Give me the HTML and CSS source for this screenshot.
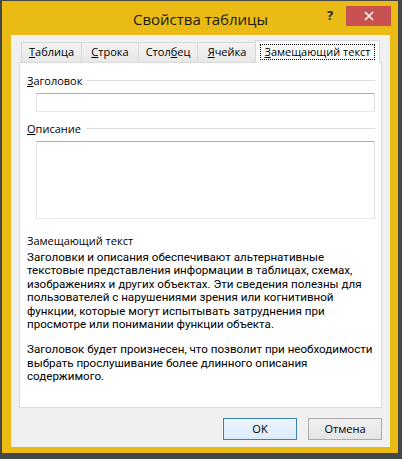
FILE: index.html
```html
<!DOCTYPE html>
<html lang="ru">
<head>
<meta charset="utf-8">
<title>Свойства таблицы</title>
<link rel="stylesheet" href="styles.css">
</head>
<body>
<div class="window">
  <div class="titlebar">
    <div class="title">Свойства таблицы</div>
    <div class="caption-btns">
      <div class="help">?</div>
      <div class="close">
        <svg width="10" height="10" viewBox="0 0 10 10"><path d="M1 1 L9 9 M9 1 L1 9" stroke="#fff" stroke-width="1.6" fill="none"/></svg>
      </div>
    </div>
  </div>
  <div class="client">
    <div class="tabs">
      <div class="tab t1"><u>Т</u>аблица</div>
      <div class="tab t2"><u>С</u>трока</div>
      <div class="tab t3">Стол<u>б</u>ец</div>
      <div class="tab t4"><u>Я</u>чейка</div>
      <div class="tab active"><span class="focus"><u>З</u>амещающий текст</span></div>
    </div>
    <div class="panel">
      <div class="group"><span class="label"><u>З</u>аголовок</span><span class="rule"></span></div>
      <div class="field input"></div>
      <div class="group second"><span class="label"><u>О</u>писание</span><span class="rule"></span></div>
      <div class="field textarea"></div>
      <div class="alt-title">Замещающий текст</div>
      <p class="desc">Заголовки и описания обеспечивают альтернативные<br>текстовые представления информации в таблицах, схемах,<br>изображениях и других объектах. Эти сведения полезны для<br>пользователей с нарушениями зрения или когнитивной<br>функции, которые могут испытывать затруднения при<br>просмотре или понимании функции объекта.</p>
      <p class="desc">Заголовок будет произнесен, что позволит при необходимости<br>выбрать прослушивание более длинного описания<br>содержимого.</p>
    </div>
    <div class="buttons">
      <div class="btn default">OK</div>
      <div class="btn">Отмена</div>
    </div>
  </div>
</div>
</body>
</html>
```
FILE: styles.css
```css
* { box-sizing: border-box; }
html, body { margin: 0; padding: 0; }
body {
  width: 402px;
  height: 459px;
  background: #474747;
  padding: 1px 4px 6px 2px;
  font-family: "Open Sans", "Noto Sans", sans-serif;
  color: #000;
}
.window {
  height: 452px;
  background: #eabb14;
  display: flex;
  flex-direction: column;
  padding: 0 8px 6px 9px;
}
.titlebar {
  height: 35px;
  position: relative;
  display: flex;
  align-items: center;
  justify-content: center;
}
.title {
  font-size: 15px;
  color: #1c1a10;
  margin-top: 2px;
}
.caption-btns {
  position: absolute;
  right: -1px;
  top: 5px;
  display: flex;
  align-items: flex-start;
}
.help {
  font-size: 13px;
  font-weight: bold;
  color: #222;
  width: 8px;
  line-height: 16px;
  margin-top: 1px;
  margin-right: 11px;
  text-align: left;
}
.close {
  width: 45px;
  height: 20px;
  background: #c75050;
  display: flex;
  align-items: center;
  justify-content: center;
}
.close svg { display: block; }
.client {
  flex: 1;
  background: #f0f0f0;
  padding: 5px 8px 7px 8px;
  display: flex;
  flex-direction: column;
  font-size: 11px;
}
.tabs {
  display: flex;
  align-items: flex-end;
  padding-left: 2px;
  height: 22px;
  position: relative;
  z-index: 1;
}
.tab {
  height: 20px;
  border: 1px solid #d9d9d9;
  border-bottom: none;
  background: linear-gradient(#f2f2f2, #e8e8e8);
  font-size: 11px;
  line-height: 18px;
  text-align: center;
  margin-right: -1px;
  white-space: nowrap;
}
.t1 { width: 61px; }
.t2 { width: 58px; }
.t3 { width: 60px; }
.t4 { width: 60px; }
.tab.active {
  height: 23px;
  width: 125px;
  margin-left: -1px;
  margin-bottom: -1px;
  background: #fff;
  padding-top: 2px;
}
.focus {
  display: inline-block;
  border: 1px dotted #000;
  line-height: 14px;
  padding: 0 3px;
}
.panel {
  height: 346px;
  border: 1px solid #d9d9d9;
  background: #fff;
  padding: 10px 6px 0 7px;
}
.group {
  display: flex;
  align-items: center;
  height: 15px;
}
.group.second { margin-top: 9px; }
.label { font-size: 11px; white-space: nowrap; }
.rule {
  flex: 1;
  border-top: 1px solid #dcdcdc;
  margin-left: 5px;
}
.field {
  margin: 5px 0 0 9px;
  border: 1px solid #abadb3;
  border-color: #abadb3 #dbdfe6 #e3e9ef #e2e3ea;
  background: #fff;
}
.input { height: 19px; }
.textarea { height: 78px; }
.alt-title {
  margin-top: 15px;
  font-size: 11px;
  line-height: 14px;
}
.desc {
  margin: 3px 0 12px 0;
  font-family: Roboto, "Open Sans", sans-serif;
  font-size: 11.6px;
  line-height: 13.4px;
  white-space: nowrap;
}
.buttons {
  display: flex;
  justify-content: flex-end;
  margin-top: 10px;
  gap: 11px;
}
.btn {
  width: 74px;
  height: 22px;
  border: 1px solid #acacac;
  background: linear-gradient(#f0f0f0, #e5e5e5);
  font-size: 11px;
  line-height: 20px;
  text-align: center;
}
.btn.default {
  border-color: #3c7fb1;
  background: linear-gradient(#ecf4fc, #dcecfc);
}
u { text-decoration: underline; text-underline-offset: 1px; }
```
